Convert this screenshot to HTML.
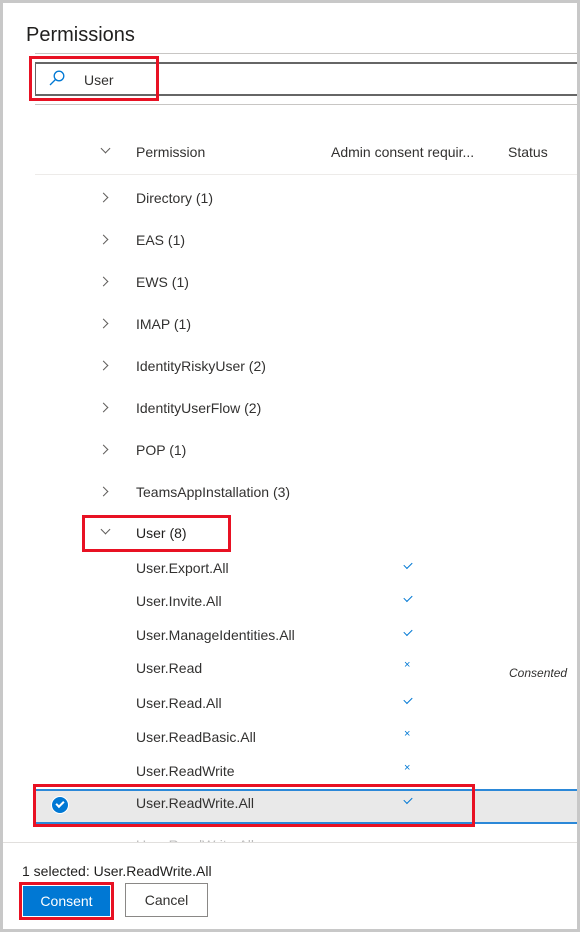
<!DOCTYPE html>
<html><head><meta charset="utf-8"><style>
*{margin:0;padding:0;box-sizing:border-box}
body{width:580px;height:932px;background:#c8c8c8;font-family:"Liberation Sans",sans-serif;color:#323130;position:relative;overflow:hidden}
.panel{position:absolute;left:3px;top:3px;width:574px;height:926px;background:#fff;overflow:hidden}
.abs{position:absolute}
.t{position:absolute;font-size:14px;white-space:nowrap;line-height:16px}
.chev{position:absolute;width:7px;height:7px;border-right:1.3px solid #605e5c;border-bottom:1.3px solid #605e5c}
.red{position:absolute;border:3px solid #e81123}
.ck{position:absolute;width:8px;height:5px;border-left:1.3px solid #0078d4;border-bottom:1.3px solid #0078d4;transform:rotate(-45deg)}
.x{position:absolute;font-size:11px;color:#0078d4;line-height:11px}
</style></head><body>
<div class="panel">
<div class="t" style="left:23px;top:20px;font-size:20px;line-height:24px;color:#201f1e">Permissions</div>
<div class="abs" style="left:32px;top:50px;width:560px;height:1px;background:#c8c6c4"></div>
<div class="abs" style="left:32px;top:59px;width:560px;height:34px;border-top:2px solid #666;border-bottom:2px solid #666;border-left:1px solid #666"></div>
<div class="abs" style="left:32px;top:101px;width:560px;height:1px;background:#c8c6c4"></div>
<svg class="abs" style="left:45px;top:66px" width="18" height="18" viewBox="0 0 18 18"><circle cx="11" cy="7" r="4.8" fill="none" stroke="#0078d4" stroke-width="1.3"/><line x1="7.5" y1="10.5" x2="2" y2="16" stroke="#0078d4" stroke-width="1.3"/></svg>
<div class="t" style="left:81px;top:69px;color:#323130">User</div>
<div class="red" style="left:26px;top:53px;width:130px;height:45px"></div>

<div class="chev" style="left:99px;top:142px;transform:rotate(45deg)"></div>
<div class="t" style="left:133px;top:141px">Permission</div>
<div class="t" style="left:328px;top:141px">Admin consent requir...</div>
<div class="t" style="left:505px;top:141px">Status</div>
<div class="abs" style="left:32px;top:171px;width:560px;height:1px;background:#edebe9"></div>

<div class="chev" style="left:97px;top:191px;transform:rotate(-45deg)"></div><div class="t" style="left:133px;top:187px">Directory (1)</div>
<div class="chev" style="left:97px;top:233px;transform:rotate(-45deg)"></div><div class="t" style="left:133px;top:229px">EAS (1)</div>
<div class="chev" style="left:97px;top:275px;transform:rotate(-45deg)"></div><div class="t" style="left:133px;top:271px">EWS (1)</div>
<div class="chev" style="left:97px;top:317px;transform:rotate(-45deg)"></div><div class="t" style="left:133px;top:313px">IMAP (1)</div>
<div class="chev" style="left:97px;top:359px;transform:rotate(-45deg)"></div><div class="t" style="left:133px;top:355px">IdentityRiskyUser (2)</div>
<div class="chev" style="left:97px;top:401px;transform:rotate(-45deg)"></div><div class="t" style="left:133px;top:397px">IdentityUserFlow (2)</div>
<div class="chev" style="left:97px;top:443px;transform:rotate(-45deg)"></div><div class="t" style="left:133px;top:439px">POP (1)</div>
<div class="chev" style="left:97px;top:485px;transform:rotate(-45deg)"></div><div class="t" style="left:133px;top:481px">TeamsAppInstallation (3)</div>

<div class="chev" style="left:99px;top:523px;transform:rotate(45deg)"></div><div class="t" style="left:133px;top:522px;color:#201f1e">User (8)</div>
<div class="red" style="left:79px;top:512px;width:149px;height:37px"></div>

<div class="t" style="left:133px;top:557px">User.Export.All</div><div class="ck" style="left:401px;top:559px"></div>
<div class="t" style="left:133px;top:590px">User.Invite.All</div><div class="ck" style="left:401px;top:592px"></div>
<div class="t" style="left:133px;top:624px">User.ManageIdentities.All</div><div class="ck" style="left:401px;top:626px"></div>
<div class="t" style="left:133px;top:657px">User.Read</div><div class="x" style="left:401px;top:657px">×</div>
<div class="t" style="left:506px;top:662px;font-size:12px;font-style:italic">Consented</div>
<div class="t" style="left:133px;top:692px">User.Read.All</div><div class="ck" style="left:401px;top:694px"></div>
<div class="t" style="left:133px;top:726px">User.ReadBasic.All</div><div class="x" style="left:401px;top:726px">×</div>
<div class="t" style="left:133px;top:760px">User.ReadWrite</div><div class="x" style="left:401px;top:760px">×</div>

<div class="abs" style="left:33px;top:786px;width:560px;height:35px;background:#e9e9e9;border-top:2px solid #2b88d8;border-bottom:2px solid #2b88d8"></div>
<div class="abs" style="left:48px;top:793px;width:18px;height:18px;border-radius:50%;background:#0078d4;border:1px solid #fff"></div>
<div class="abs" style="left:53px;top:798px;width:8px;height:5px;border-left:2px solid #fff;border-bottom:2px solid #fff;transform:rotate(-45deg)"></div>
<div class="t" style="left:133px;top:792px">User.ReadWrite.All</div><div class="ck" style="left:401px;top:794px"></div>
<div class="red" style="left:30px;top:781px;width:442px;height:43px"></div>
<div class="t" style="left:133px;top:834px;color:#bbb">User.ReadWrite.All</div>

<div class="abs" style="left:0;top:839px;width:574px;height:90px;background:#fff;border-top:1px solid #e1dfdd"></div>
<div class="t" style="left:19px;top:860px;color:#201f1e">1 selected: User.ReadWrite.All</div>
<div class="abs" style="left:20px;top:883px;width:87px;height:30px;background:#0078d4;color:#fff;font-size:14px;text-align:center;line-height:30px">Consent</div>
<div class="red" style="left:16px;top:879px;width:95px;height:38px"></div>
<div class="abs" style="left:122px;top:880px;width:83px;height:34px;border:1px solid #8a8886;font-size:14px;text-align:center;line-height:32px">Cancel</div>
</div>
</body></html>
